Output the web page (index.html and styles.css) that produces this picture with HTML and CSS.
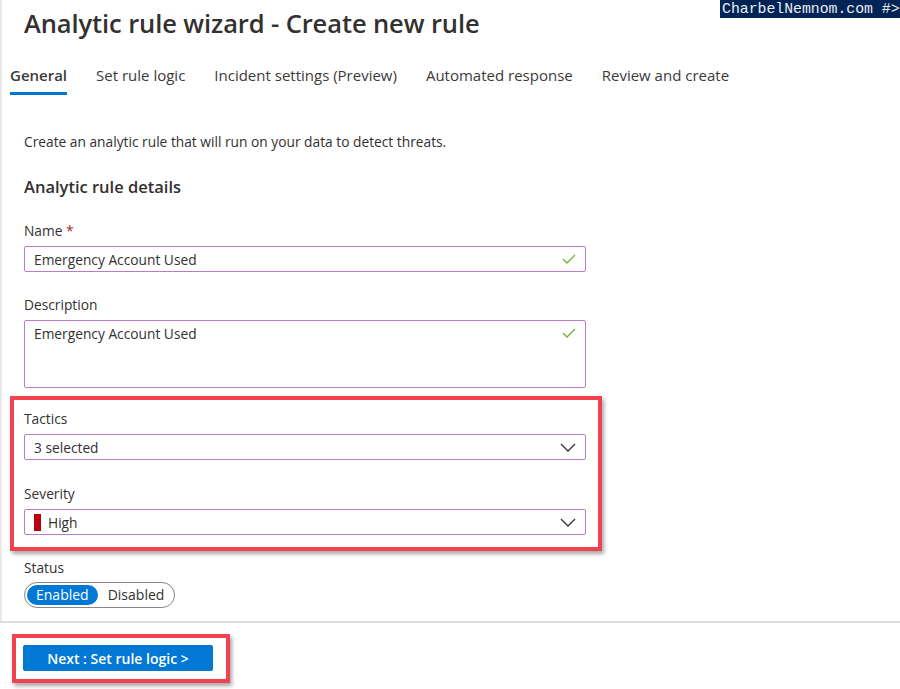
FILE: index.html
```html
<!DOCTYPE html>
<html lang="en">
<head>
  <meta charset="UTF-8">
  <title>Analytic rule wizard</title>
  <link rel="stylesheet" href="styles.css">
</head>
<body>

  <div class="watermark">CharbelNemnom.com #&gt;</div>

  <div class="wizard">
    <h1>Analytic rule wizard - Create new rule</h1>

    <!-- Tabs -->
    <nav class="tabs">
      <span class="tab active">General</span>
      <span class="tab">Set rule logic</span>
      <span class="tab">Incident settings (Preview)</span>
      <span class="tab">Automated response</span>
      <span class="tab">Review and create</span>
    </nav>

    <section class="form">
      <p class="intro">Create an analytic rule that will run on your data to detect threats.</p>
      <h2>Analytic rule details</h2>

      <div class="field">
        <label>Name <span class="req">*</span></label>
        <div class="control">
          <span>Emergency Account Used</span>
          <svg class="check" width="14" height="10" viewBox="0 0 14 10"><polyline points="1,5 5,9 13,1" fill="none" stroke="#6bb33a" stroke-width="1.3"/></svg>
        </div>
      </div>

      <div class="field">
        <label>Description</label>
        <div class="control textarea">
          <span>Emergency Account Used</span>
          <svg class="check" width="14" height="10" viewBox="0 0 14 10"><polyline points="1,5 5,9 13,1" fill="none" stroke="#6bb33a" stroke-width="1.3"/></svg>
        </div>
      </div>

      <!-- highlighted dropdowns -->
      <div class="highlight">
        <div class="field">
          <label>Tactics</label>
          <div class="control">
            <span>3 selected</span>
            <svg class="chevron" width="16" height="9" viewBox="0 0 16 9"><polyline points="1,1 8,8 15,1" fill="none" stroke="#323130" stroke-width="1.3"/></svg>
          </div>
        </div>

        <div class="field last">
          <label>Severity</label>
          <div class="control">
            <span class="sev"><i class="sev-bar"></i>High</span>
            <svg class="chevron" width="16" height="9" viewBox="0 0 16 9"><polyline points="1,1 8,8 15,1" fill="none" stroke="#323130" stroke-width="1.3"/></svg>
          </div>
        </div>
      </div>

      <div class="field status">
        <label>Status</label>
        <div class="toggle">
          <span class="opt on">Enabled</span>
          <span class="opt">Disabled</span>
        </div>
      </div>
    </section>
  </div>

  <footer class="actions">
    <div class="highlight-btn">
      <button>Next : Set rule logic &gt;</button>
    </div>
  </footer>

</body>
</html>
```

FILE: styles.css
```css
body {
  margin: 0;
  background: #fff;
  font-family: "Open Sans", "Noto Sans", sans-serif;
  color: #323130;
}

.watermark {
  position: absolute;
  top: 0;
  right: 0;
  width: 180px;
  height: 18px;
  background: #012456;
  color: #eeedf0;
  font-family: "Liberation Mono", monospace;
  font-size: 14.8px;
  line-height: 18px;
  text-align: left;
  padding-left: 2px;
  box-sizing: border-box;
  white-space: nowrap;
}

.wizard {
  border-left: 2px solid #e8e8e8;
}

h1 {
  margin: 0;
  padding: 4px 0 0 22px;
  font-size: 25.5px;
  font-weight: 600;
  line-height: 38px;
  letter-spacing: -0.1px;
}

/* Tabs */
.tabs {
  display: flex;
  gap: 29px;
  margin-top: 22px;
  padding-left: 8px;
}

.tab {
  font-size: 15px;
  line-height: 22px;
  padding-bottom: 6px;
  border-bottom: 3px solid transparent;
  color: #3b3a39;
}

.tab.active {
  font-weight: 600;
  border-bottom-color: #0078d4;
}

/* Form */
.form {
  padding: 0 0 13px 22px;
  width: 562px;
  font-size: 13.75px;
}

.intro {
  margin: 37px 0 0;
  line-height: 20px;
}

h2 {
  margin: 24px 0 0;
  font-size: 16.5px;
  font-weight: 600;
  line-height: 22px;
}

.field {
  margin-top: 23px;
}

.field label {
  display: block;
  line-height: 20px;
  margin-bottom: 5px;
}

.req {
  color: #a4262c;
}

.control {
  display: flex;
  align-items: center;
  justify-content: space-between;
  height: 26px;
  box-sizing: border-box;
  border: 1px solid #b77ec7;
  border-radius: 2px;
  padding: 0 9px 0 9px;
}

.control.textarea {
  height: 68px;
  align-items: flex-start;
  padding-top: 3px;
}

.control.textarea .check {
  margin-top: 4px;
}

.sev {
  display: flex;
  align-items: center;
}

.sev-bar {
  display: inline-block;
  width: 7px;
  height: 17px;
  background: #b8000f;
  margin-right: 7px;
}

/* red highlight around dropdowns */
.highlight {
  margin: 8px -16px 0 -14px;
  padding: 9px 12px 12px 10px;
  border: 4px solid #f3424f;
  box-shadow: 2px 3px 4px rgba(0, 0, 0, 0.35);
}

.highlight .field {
  margin-top: 0;
}

.highlight .field.last {
  margin-top: 24px;
}

.field.status {
  margin-top: 7px;
}

.field.status label {
  margin-bottom: 4px;
}

.toggle {
  display: inline-flex;
  align-items: center;
  gap: 10px;
  height: 26px;
  box-sizing: border-box;
  padding: 0 10px 0 2px;
  border: 1px solid #8a8886;
  border-radius: 13px;
  font-size: 14px;
}

.opt {
  line-height: 20px;
}

.opt.on {
  background: #0078d4;
  color: #fff;
  border-radius: 10px;
  padding: 0 9px;
}

/* Footer */
.actions {
  border-top: 2px solid #dcdcdc;
  padding: 11px 0 6px 12px;
}

.highlight-btn {
  display: inline-block;
  padding: 7px 13px 8px 7px;
  border: 4px solid #f3424f;
  box-shadow: 2px 3px 4px rgba(0, 0, 0, 0.35);
}

.highlight-btn button {
  display: block;
  width: 190px;
  height: 26px;
  background: #0078d4;
  color: #fff;
  border: none;
  border-radius: 2px;
  font-family: "Open Sans", "Noto Sans", sans-serif;
  font-size: 14px;
  font-weight: 600;
  cursor: pointer;
}
```
